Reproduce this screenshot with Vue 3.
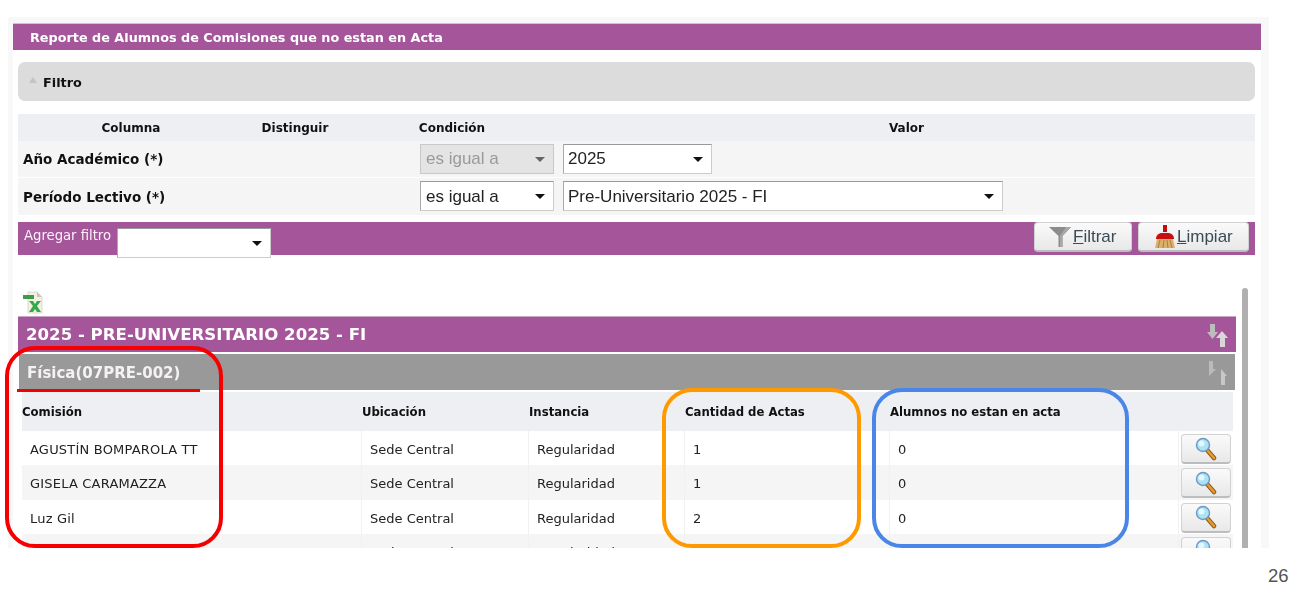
<script setup>
const rows = [
  { name: 'AGUSTÍN BOMPAROLA TT', place: 'Sede Central', stage: 'Regularidad', actas: '1', missing: '0' },
  { name: 'GISELA CARAMAZZA', place: 'Sede Central', stage: 'Regularidad', actas: '1', missing: '0' },
  { name: 'Luz Gil', place: 'Sede Central', stage: 'Regularidad', actas: '2', missing: '0' },
  { name: '', place: 'Sede Central', stage: 'Regularidad', actas: '', missing: '' }
]
</script>

<template>
  <div class="page">
    <div class="frame">
      <div class="inner">
        <h1 class="title">Reporte de Alumnos de Comisiones que no estan en Acta</h1>
        <div class="content">
          <div class="filter-head"><span class="up"></span>Filtro</div>

          <div class="filter-table">
            <div class="f-row f-header">
              <div>Columna</div>
              <div>Distinguir</div>
              <div>Condición</div>
              <div>Valor</div>
            </div>
            <div class="f-row f-first">
              <div class="f-label">Año Académico (*)</div>
              <div class="sel s-cond disabled">es igual a<i class="caret"></i></div>
              <div class="sel s-year">2025<i class="caret"></i></div>
            </div>
            <div class="f-row f-second">
              <div class="f-label">Período Lectivo (*)</div>
              <div class="sel s-cond">es igual a<i class="caret"></i></div>
              <div class="sel s-period">Pre-Universitario 2025 - FI<i class="caret"></i></div>
            </div>
          </div>

          <div class="add-bar">
            <span class="add-label">Agregar filtro</span>
            <div class="sel s-add"><i class="caret"></i></div>
            <div class="btns">
              <button class="btn b-filter">
                <svg width="24" height="22" viewBox="0 0 24 22"><path d="M1 1h22l-8.500 9v11h-4V10z" fill="#8c8c8c"/><path d="M12 10v11h2.500V10L23 1h-5z" fill="#a8a8a8"/></svg>
                <span><u>F</u>iltrar</span>
              </button>
              <button class="btn b-clean">
                <svg width="22" height="24" viewBox="0 0 22 24"><path d="M9 0h4v7H9z" fill="#c40d0d"/><path d="M2 14c0-4 3-6 6-6h6c3 0 6 2 6 6z" fill="#c80f0f"/><path d="M3 14h16l2 9H1z" fill="#dcb06c"/><path d="M6 15l-2 8M10 15l-1 8M13 15l1 8M16 15l2 8" stroke="#a98040" fill="none"/></svg>
                <span><u>L</u>impiar</span>
              </button>
            </div>
          </div>

          <div class="results">
            <div class="list">
              <svg class="xls" width="22" height="23" viewBox="0 0 22 23">
                <path d="M5 1h9l5 5v16H5z" fill="#f2efe3" stroke="#dcd9cc"/>
                <path d="M14 1v5h5z" fill="#c9c6b6"/>
                <rect x="0" y="4" width="11" height="4" fill="#3c9c48"/>
                <path d="M6 10h4l2 3 2-3h4l-4 5 4 6h-4l-2-3-2 3H6l4-6z" fill="#35a84a"/>
              </svg>

              <div class="group">
                <span>2025 - PRE-UNIVERSITARIO 2025 - FI</span>
                <svg width="24" height="26" viewBox="0 0 24 26"><path d="M4 2h5v8h3l-5.500 7L1 10h3z" fill="#bcbcbc"/><path d="M16 9l6 7h-3v9h-5v-9h-4z" fill="#d8d8d8"/></svg>
              </div>
              <div class="sub">
                <span>Física(07PRE-002)</span>
                <svg width="24" height="26" viewBox="0 0 24 26"><path d="M4 1h4v8h3l-7 7z" fill="#bbb"/><path d="M16 9l6 7h-2v9h-4z" fill="#c8c8c8"/></svg>
              </div>

              <div class="grid g-head">
                <div>Comisión</div>
                <div>Ubicación</div>
                <div>Instancia</div>
                <div>Cantidad de Actas</div>
                <div>Alumnos no estan en acta</div>
                <div></div>
              </div>
              <div v-for="(r, i) in rows" :key="i" class="grid g-row" :class="{ odd: i % 2 === 1 }">
                <div class="name">{{ r.name }}</div>
                <div>{{ r.place }}</div>
                <div>{{ r.stage }}</div>
                <div>{{ r.actas }}</div>
                <div>{{ r.missing }}</div>
                <div class="act">
                  <button class="view">
                    <svg width="24" height="24" viewBox="0 0 24 24">
                      <path d="M13.500 13.500l6.500 7.500" stroke="#8a5a1c" stroke-width="4.500" stroke-linecap="round"/>
                      <path d="M14 14l6 7" stroke="#e89a2c" stroke-width="2.600" stroke-linecap="round"/>
                      <circle cx="9" cy="8" r="6.500" fill="#a9e3f5" stroke="#7396c2" stroke-width="1.400"/>
                      <circle cx="7.500" cy="6.500" r="3" fill="#e3f8fd"/>
                    </svg>
                  </button>
                </div>
              </div>
            </div>
            <div class="scroll"></div>
          </div>
        </div>
      </div>
    </div>

    <div class="mark red"></div>
    <div class="mark red-line"></div>
    <div class="mark orange"></div>
    <div class="mark blue"></div>
    <div class="page-no">26</div>
  </div>
</template>

<style>
html, body { margin: 0; background: #fff; }
</style>

<style scoped>
.page {
  position: relative;
  width: 1304px;
  height: 608px;
  overflow: hidden;
  padding-top: 17px;
  box-sizing: border-box;
  background: #fff;
  font-family: "DejaVu Sans", sans-serif;
  color: #111;
}
.frame {
  width: 1261px;
  height: 531px;
  margin-left: 8px;
  padding: 6px 8px 0 5px;
  box-sizing: border-box;
  background: #f8f8f8;
  filter: blur(0.35px);
}
.inner { height: 525px; background: #fff; overflow: hidden; }
.title {
  margin: 0;
  height: 26px;
  border-top: 1px solid #c9c9c9;
  background: #a5569b;
  color: #fff;
  font-size: 12.800px;
  font-weight: 700;
  line-height: 28px;
  padding-left: 17px;
}
.content { padding: 12px 6px 0 5px; }
.filter-head {
  height: 39px;
  display: flex;
  align-items: center;
  background: #dcdcdc;
  border-radius: 7px;
  font-size: 12.800px;
  font-weight: 700;
  padding: 2px 0 0 11px;
  box-sizing: border-box;
}
.up {
  width: 0; height: 0;
  margin-right: 6px;
  margin-bottom: 6px;
  border: 4px solid transparent;
  border-top: 0;
  border-bottom: 6px solid #c4c4c4;
}
.filter-table { margin-top: 13px; }
.f-row { display: grid; grid-template-columns: 402px 143px 1fr; align-items: start; padding-top: 3px; box-sizing: border-box; }
.f-header {
  height: 27px;
  padding-top: 0;
  align-items: center;
  grid-template-columns: 226px 102px 212px 1fr;
  background: #eeeff3;
  font-size: 12px;
  font-weight: 700;
  text-align: center;
  line-height: 29px;
}
.f-first { height: 37px; background: #f5f5f5; border-bottom: 1px solid #fff; }
.f-second { height: 37px; background: #f5f5f5; }
.f-second .sel { line-height: 30px; }
.f-label { font-size: 13.500px; font-weight: 700; padding-left: 5px; align-self: center; margin-top: -3px; }
.sel {
  position: relative;
  box-sizing: border-box;
  height: 30px;
  line-height: 27px;
  background: #fff;
  border: 1px solid #ccc;
  border-top-color: #999;
  border-left-color: #aaa;
  font-family: "Liberation Sans", sans-serif;
  font-size: 17px;
  padding-left: 5px;
  color: #222;
}
.s-cond { width: 134px; }
.s-year { width: 149px; padding-left: 4px; }
.s-period { width: 440px; padding-left: 4px; }
.disabled { background: #e4e4e4; color: #9a9a9a; border-color: #c8c8c8; }
.caret {
  position: absolute;
  right: 8px;
  top: 12px;
  width: 0; height: 0;
  border: 5px solid transparent;
  border-bottom: 0;
  border-top: 5px solid #111;
}
.disabled .caret { border-top-color: #666; }
.add-bar {
  height: 33px;
  margin-top: 7px;
  display: flex;
  background: #a5569b;
}
.add-label { color: #fbf2f9; font-size: 13.200px; padding: 6px 0 0 6px; width: 93px; box-sizing: border-box; white-space: nowrap; }
.s-add { width: 154px; height: 30px; margin: 6px 0 0 6px; flex: none; }
.btns { margin-left: auto; display: flex; gap: 6px; padding-right: 6px; }
.btn {
  height: 30px;
  display: flex;
  align-items: center;
  gap: 1px;
  padding: 0 0 0 13px;
  background: linear-gradient(#fafafa, #e8e8e8);
  border: 1px solid #d2d2d2;
  border-bottom: 2px solid #bdbdbd;
  border-radius: 4px;
  font-family: "Liberation Sans", sans-serif;
  font-size: 17px;
  color: #3b4a57;
}
.b-filter { width: 98px; }
.b-clean { width: 111px; padding-left: 15px; }
.results { display: flex; gap: 6px; margin-top: 33px; }
.list { width: 1218px; padding-top: 3px; }
.xls { display: block; margin-left: 5px; }
.group, .sub {
  display: flex;
  align-items: center;
  justify-content: space-between;
  color: #fff;
  font-weight: 700;
}
.group {
  height: 36px;
  margin-top: 2px;
  background: #a5569b;
  border-top: 1px solid #c8a7c3;
  box-sizing: border-box;
  font-size: 16.600px;
  padding: 0 6px 0 8px;
}
.sub {
  height: 36px;
  margin: 2px 1px 0;
  background: #999;
  font-size: 15px;
  padding: 1px 6px 0 8px;
  box-sizing: border-box;
  color: #f6f2f4;
}
.grid {
  display: grid;
  grid-template-columns: 339px 167px 156px 205px 289px 1fr;
  margin: 0 3px 0 4px;
}
.g-head {
  height: 39px;
  margin-top: 2px;
  align-items: center;
  background: #eeeff3;
  font-size: 11.700px;
  font-weight: 700;
  line-height: 41px;
}
.g-head > div:nth-child(n+2) { padding-left: 1px; }
.g-row {
  height: 34.300px;
  font-size: 13px;
  color: #222;
}
.g-row.odd { background: #f5f5f5; }
.g-row > div {
  border-left: 1px solid #f1f1f1;
  padding-left: 8px;
  line-height: 37px;
}
.g-row > .name { border-left: 0; padding-left: 8px; letter-spacing: 0.2px; }
.g-row > .act { padding: 3px 0 0 2px; line-height: 0; }
.view {
  width: 50px;
  height: 30px;
  padding: 0 0 0 12px;
  display: flex;
  align-items: center;
  background: linear-gradient(#fafafa, #e8e8e8);
  border: 1px solid #d2d2d2;
  border-bottom: 2px solid #bdbdbd;
  border-radius: 4px;
}
.scroll { width: 6px; height: 260px; background: #b0b0b0; border-radius: 3px 3px 0 0; }

.mark { position: absolute; box-sizing: border-box; border-radius: 30px; }
.red { left: 5px; top: 346px; width: 218px; height: 202px; border: 4px solid #f40000; }
.red-line { left: 17px; top: 389px; width: 183px; height: 3px; background: #f40000; border-radius: 0; }
.orange { left: 662px; top: 388px; width: 199px; height: 160px; border: 4px solid #ff9900; }
.blue { left: 872px; top: 388px; width: 257px; height: 160px; border: 4px solid #4a86e8; }
.page-no {
  position: absolute;
  left: 1268px;
  top: 565px;
  font-family: "Liberation Sans", sans-serif;
  font-size: 18.500px;
  color: #555;
}
</style>
